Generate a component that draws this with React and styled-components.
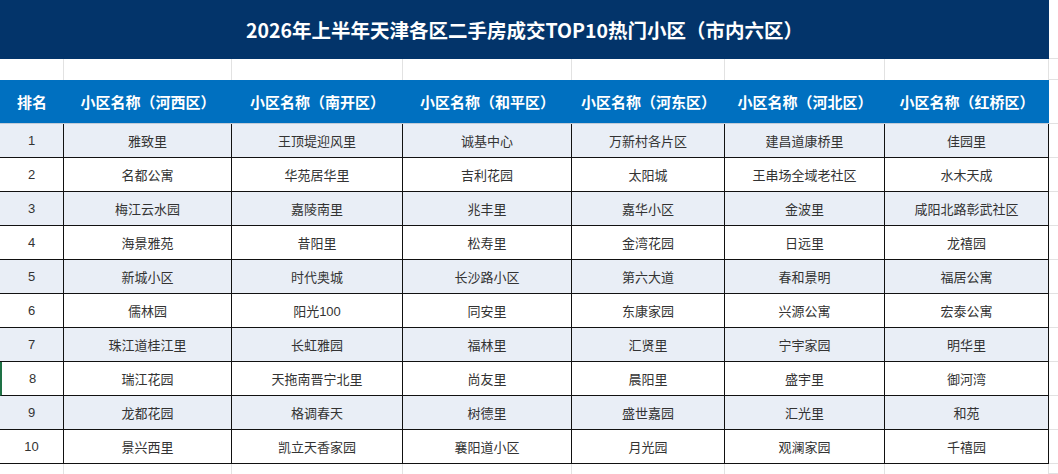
import { Fragment } from "react";
import styled, { createGlobalStyle } from "styled-components";

const GlobalStyle = createGlobalStyle`
  html, body {
    margin: 0;
    padding: 0;
    background: #fff;
  }
  body {
    font-family: "Liberation Sans", "Noto Sans CJK SC", sans-serif;
  }
`;

const Sheet = styled.div`
  display: grid;
  grid-template-columns: 64px 168px 171px 169px 153px 160px 164px 1fr;
  grid-template-rows: 59px 21px 44px repeat(10, 34px) 1fr;
  width: 1058px;
  height: 474px;
  overflow: hidden;
  background: #fff;
`;

const TitleCell = styled.div`
  grid-column: 1 / 8;
  display: flex;
  align-items: center;
  justify-content: center;
  background-color: #03346a;
  color: #fff;
  font-family: "Noto Sans CJK SC", sans-serif;
  font-size: 19.5px;
  font-weight: bold;
`;

const BlankCell = styled.div`
  box-sizing: border-box;
  border-right: 1px solid #e2e2e2;
`;

const FillCell = styled.div`
  box-sizing: border-box;
  border-bottom: 1px solid #e2e2e2;
`;

const HeadCell = styled.div`
  box-sizing: border-box;
  display: flex;
  align-items: center;
  justify-content: center;
  background-color: #0070c0;
  border-bottom: 1px solid #c3ccd8;
  color: #fff;
  font-family: "Noto Sans CJK SC", sans-serif;
  font-size: 15px;
  font-weight: bold;
  white-space: nowrap;
`;

const DataCell = styled.div`
  box-sizing: border-box;
  display: flex;
  align-items: center;
  justify-content: center;
  background-color: ${(p) => (p.$odd ? "#e9eef6" : "#fff")};
  border-right: 1px solid #111;
  border-bottom: 1px solid #111;
  border-left: ${(p) => (p.$marked ? "2px solid #1e7145" : "none")};
  color: #333;
  font-size: 13px;
  white-space: nowrap;
`;

const headers = [
  "排名",
  "小区名称（河西区）",
  "小区名称（南开区）",
  "小区名称（和平区）",
  "小区名称（河东区）",
  "小区名称（河北区）",
  "小区名称（红桥区）",
];

const rows = [
  ["1", "雅致里", "王顶堤迎风里", "诚基中心", "万新村各片区", "建昌道康桥里", "佳园里"],
  ["2", "名都公寓", "华苑居华里", "吉利花园", "太阳城", "王串场全域老社区", "水木天成"],
  ["3", "梅江云水园", "嘉陵南里", "兆丰里", "嘉华小区", "金波里", "咸阳北路彰武社区"],
  ["4", "海景雅苑", "昔阳里", "松寿里", "金湾花园", "日远里", "龙禧园"],
  ["5", "新城小区", "时代奥城", "长沙路小区", "第六大道", "春和景明", "福居公寓"],
  ["6", "儒林园", "阳光100", "同安里", "东康家园", "兴源公寓", "宏泰公寓"],
  ["7", "珠江道桂江里", "长虹雅园", "福林里", "汇贤里", "宁宇家园", "明华里"],
  ["8", "瑞江花园", "天拖南晋宁北里", "尚友里", "晨阳里", "盛宇里", "御河湾"],
  ["9", "龙都花园", "格调春天", "树德里", "盛世嘉园", "汇光里", "和苑"],
  ["10", "景兴西里", "凯立天香家园", "襄阳道小区", "月光园", "观澜家园", "千禧园"],
];

const App = () => {
  return (
    <>
      <GlobalStyle />
      <Sheet>
        <TitleCell>2026年上半年天津各区二手房成交TOP10热门小区（市内六区）</TitleCell>
        <FillCell />

        {headers.map((h) => (
          <BlankCell key={"b" + h} />
        ))}
        <FillCell />

        {headers.map((h) => (
          <HeadCell key={h}>{h}</HeadCell>
        ))}
        <FillCell />

        {rows.map((row, i) => (
          <Fragment key={i}>
            {row.map((v, j) => (
              <DataCell key={j} $odd={i % 2 === 0} $marked={i === 7 && j === 0}>
                {v}
              </DataCell>
            ))}
            <FillCell />
          </Fragment>
        ))}

        {headers.map((h) => (
          <BlankCell key={"t" + h} />
        ))}
        <FillCell />
      </Sheet>
    </>
  );
};

export default App;
